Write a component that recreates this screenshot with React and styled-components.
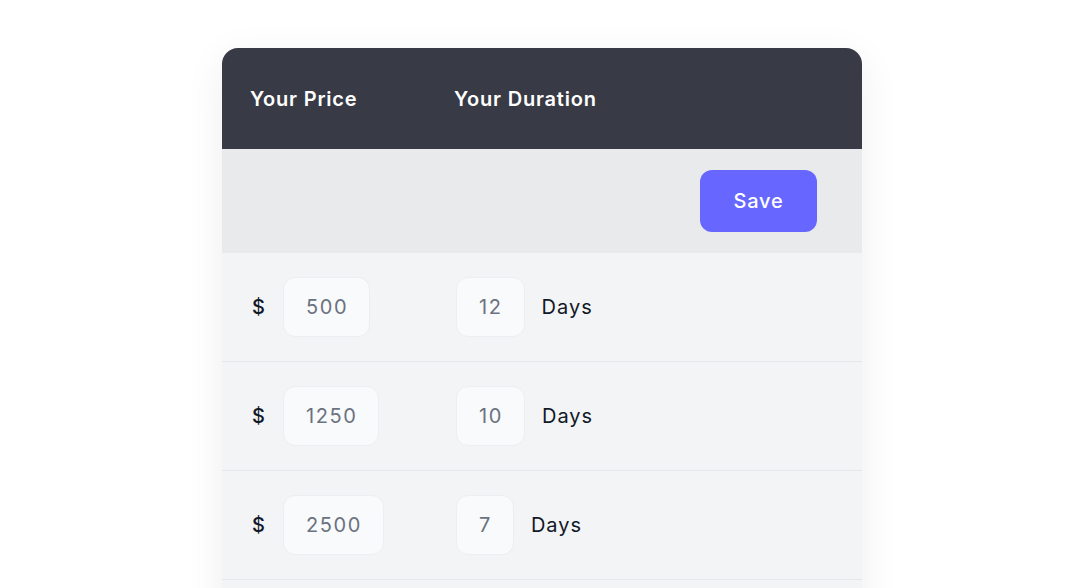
import styled, { createGlobalStyle } from "styled-components";

const GlobalStyle = createGlobalStyle`
  body {
    margin: 0;
    background: #ffffff;
    font-family: "Inter", "Open Sans", sans-serif;
  }
`;

const Page = styled.div`
  display: flex;
  justify-content: center;
  padding-top: 48px;
`;

const Card = styled.div`
  width: 640px;
  border-radius: 16px;
  overflow: hidden;
  background: #f3f4f6;
  box-shadow: 0 10px 40px rgba(17, 24, 39, 0.07);
`;

const Header = styled.div`
  height: 101px;
  background: #383a45;
  display: grid;
  grid-template-columns: 204px auto;
  align-items: center;
  padding: 0 28px;
  color: #ffffff;
  font-size: 20px;
  font-weight: 600;
  letter-spacing: 0.8px;
`;

const Toolbar = styled.div`
  height: 104px;
  background: #e9eaec;
  display: flex;
  align-items: center;
  justify-content: flex-end;
  padding: 0 45px;
`;

const SaveButton = styled.button`
  width: 117px;
  height: 62px;
  border: none;
  border-radius: 12px;
  background: #6767ff;
  color: #ffffff;
  font-family: inherit;
  font-size: 20px;
  font-weight: 500;
  letter-spacing: 0.8px;
  cursor: pointer;
`;

const Row = styled.div`
  height: 108px;
  display: grid;
  grid-template-columns: 204px auto;
  align-items: center;
  padding: 0 30px;
  border-bottom: 1px solid #e5e7eb;
`;

const Cell = styled.div`
  display: flex;
  align-items: center;
  gap: ${(p) => p.$gap}px;
`;

const Label = styled.span`
  font-size: 20px;
  color: #111827;
  letter-spacing: 1px;
  font-weight: ${(p) => (p.$bold ? 500 : 400)};
`;

const Field = styled.div`
  height: 60px;
  box-sizing: border-box;
  display: inline-flex;
  align-items: center;
  padding: 0 ${(p) => p.$pad - 1}px 0 ${(p) => p.$pad}px;
  background: #f9fafb;
  border: 1px solid #eceef1;
  border-radius: 12px;
  font-size: 20px;
  letter-spacing: 1.6px;
  color: #6b7280;
`;

const rows = [
  { price: "500", days: "12" },
  { price: "1250", days: "10" },
  { price: "2500", days: "7" },
];

export default function App() {
  return (
    <>
      <GlobalStyle />
      <Page>
        <Card>
          <Header>
            <span>Your Price</span>
            <span>Your Duration</span>
          </Header>
          <Toolbar>
            <SaveButton type="button">Save</SaveButton>
          </Toolbar>
          {rows.map((r) => (
            <Row key={r.price}>
              <Cell $gap={17}>
                <Label $bold>$</Label>
                <Field $pad={22}>{r.price}</Field>
              </Cell>
              <Cell $gap={17}>
                <Field $pad={22}>{r.days}</Field>
                <Label>Days</Label>
              </Cell>
            </Row>
          ))}
          <Row />
        </Card>
      </Page>
    </>
  );
}
